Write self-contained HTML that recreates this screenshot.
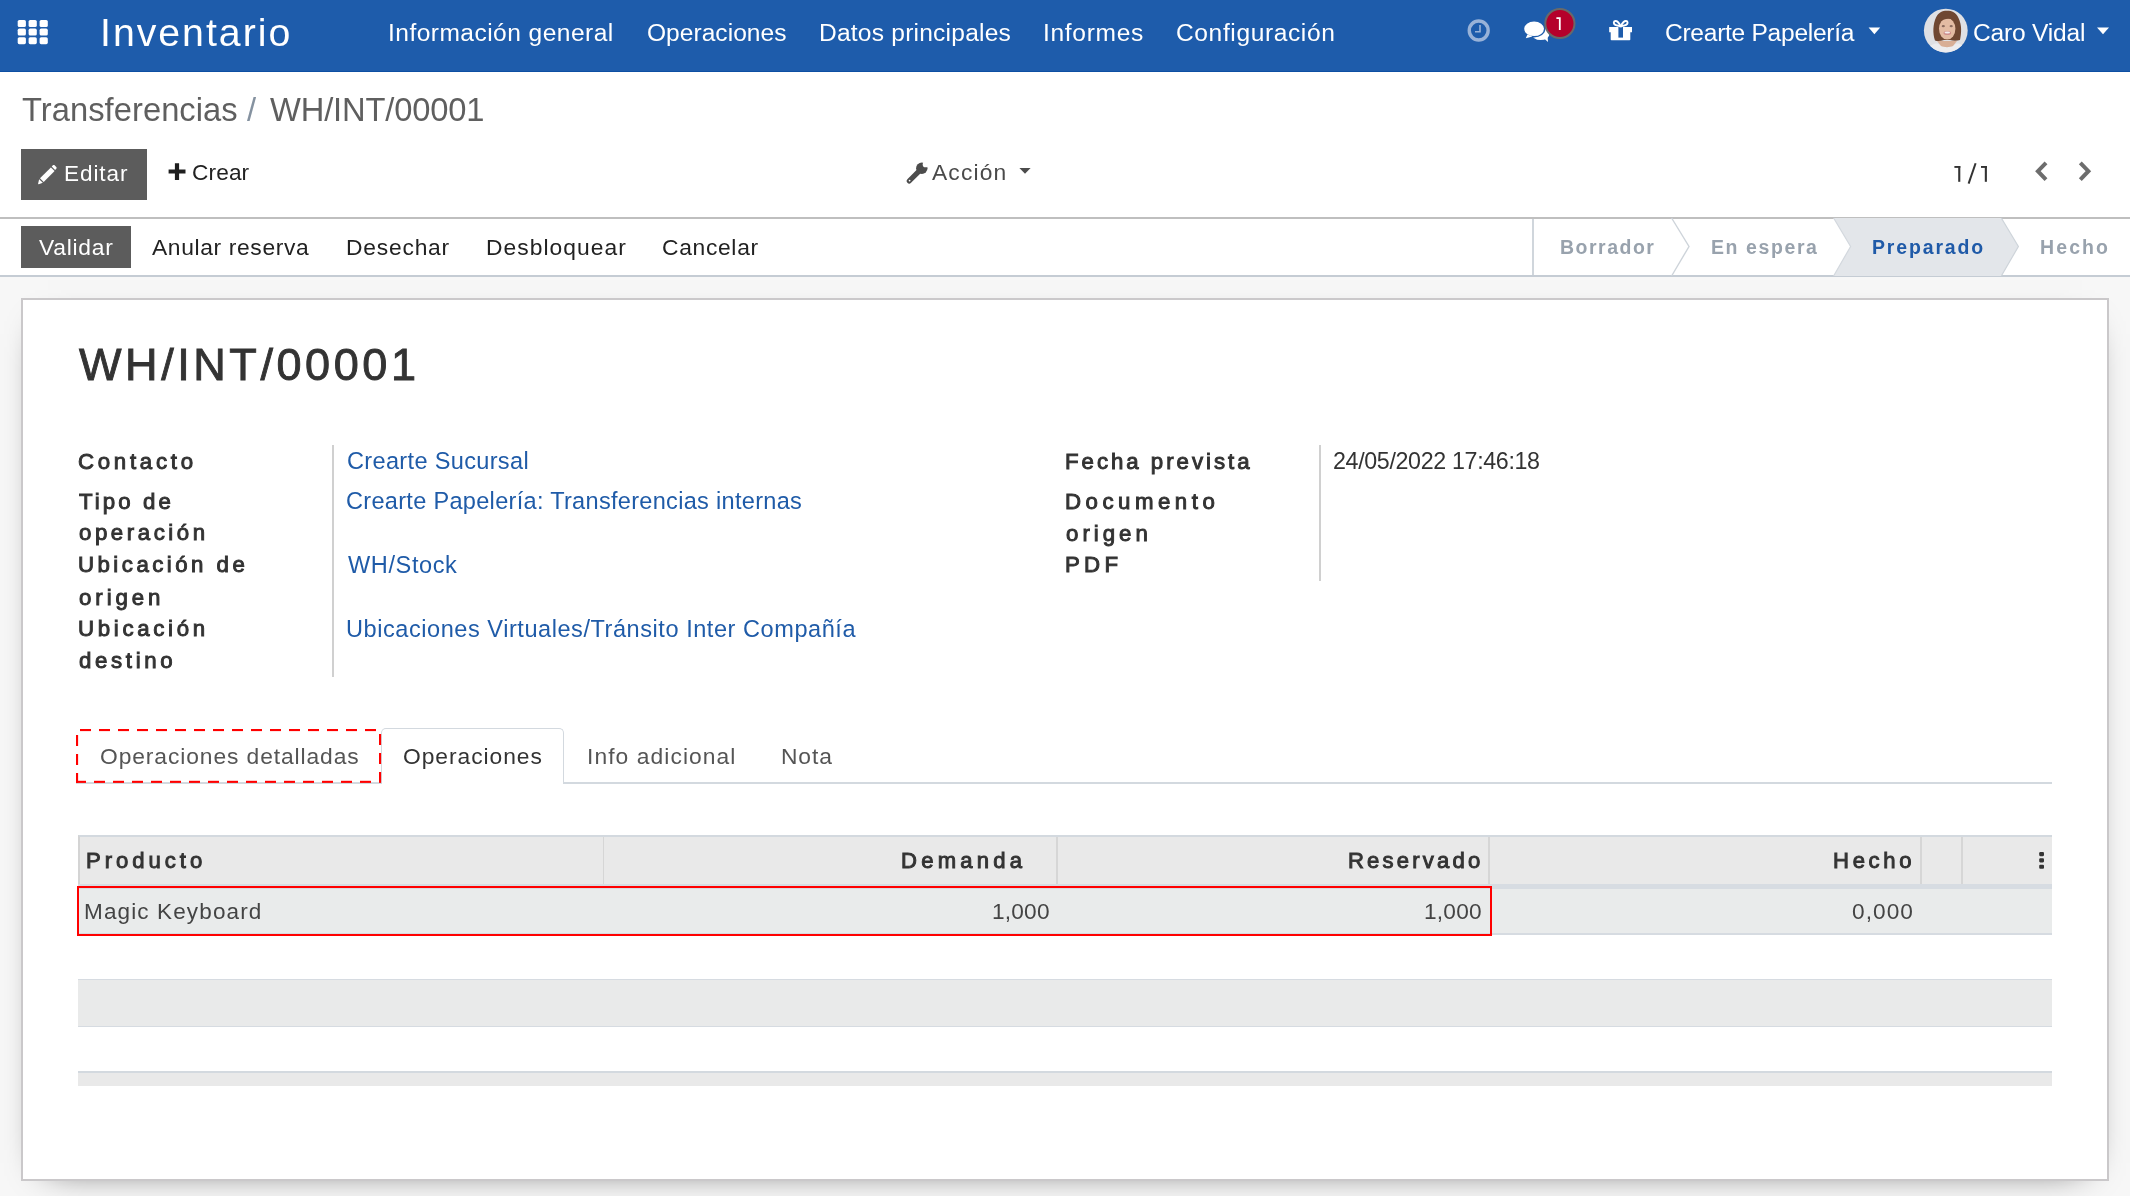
<!DOCTYPE html>
<html lang="es">
<head>
<meta charset="utf-8">
<title>Transferencias / WH/INT/00001 - Inventario</title>
<style>
html,body{margin:0;padding:0;}
body{width:2130px;height:1196px;overflow:hidden;position:relative;background:#f7f7f7;font-family:"Liberation Sans",sans-serif;}
.a{position:absolute;box-sizing:border-box;}
.t{position:absolute;white-space:nowrap;line-height:1;font-family:"Liberation Sans",sans-serif;will-change:transform;}
svg{position:absolute;overflow:visible;}
</style>
</head>
<body>
<!-- navbar -->
<div class="a" style="left:0;top:0;width:2130px;height:72px;background:#1e5cab;border-bottom:1px solid #0d4fa3;"></div>
<svg style="left:0;top:0" width="2130" height="72">
  <g fill="#fff">
    <rect x="17.7" y="20" width="8.2" height="7" rx="1.6"/>
    <rect x="28.6" y="20" width="8.2" height="7" rx="1.6"/>
    <rect x="39.6" y="20" width="8.2" height="7" rx="1.6"/>
    <rect x="17.7" y="28.6" width="8.2" height="7" rx="1.6"/>
    <rect x="28.6" y="28.6" width="8.2" height="7" rx="1.6"/>
    <rect x="39.6" y="28.6" width="8.2" height="7" rx="1.6"/>
    <rect x="17.7" y="37.2" width="8.2" height="7" rx="1.6"/>
    <rect x="28.6" y="37.2" width="8.2" height="7" rx="1.6"/>
    <rect x="39.6" y="37.2" width="8.2" height="7" rx="1.6"/>
  </g>
  <!-- clock -->
  <g stroke="#98b2d8" fill="none">
    <circle cx="1478.7" cy="30.5" r="9.45" stroke-width="3.4"/>
    <path d="M1480 25 V31.8 H1475" stroke-width="1.6"/>
  </g>
  <!-- chat -->
  <g fill="#fff">
    <ellipse cx="1540.6" cy="33.6" rx="9" ry="6.4"/>
    <path d="M1543.5 38 L1548 42 L1547.6 36.5 Z"/>
  </g>
  <g fill="#fff" stroke="#1e5cab" stroke-width="1.4">
    <ellipse cx="1534.1" cy="28.8" rx="10.6" ry="8"/>
  </g>
  <path d="M1527.4 34.6 L1525.8 38.3 L1532.5 36.4 Z" fill="#fff"/>
  <circle cx="1559.9" cy="23.5" r="14.6" fill="#b5002b" stroke="#696969" stroke-width="2"/>
  <path d="M1556.4 18.1 H1559.8 V30" stroke="#fff" stroke-width="1.8" fill="none"/>
  <!-- gift -->
  <path d="M1609.2 27 H1632 V32.3 H1630.3 V39.4 Q1630.3 40.2 1629.5 40.2 H1611.5 Q1610.7 40.2 1610.7 39.4 V32.3 H1609.2 Z" fill="#fff"/>
  <rect x="1618.4" y="27" width="4.6" height="10.6" fill="#1e5cab"/>
  <g fill="none" stroke="#fff" stroke-width="1.9">
    <path d="M1620.7 26.2 C1616.5 25.8 1613.8 24.8 1613.8 22.8 C1613.8 20.6 1616.4 20.6 1617.8 22 C1619 23.2 1620 24.6 1620.7 26.2 Z"/>
    <path d="M1620.7 26.2 C1624.9 25.8 1627.6 24.8 1627.6 22.8 C1627.6 20.6 1625 20.6 1623.6 22 C1622.4 23.2 1621.4 24.6 1620.7 26.2 Z"/>
  </g>
  <!-- carets -->
  <path d="M1868.6 27.6 H1880.2 L1874.4 34.2 Z" fill="#fff"/>
  <path d="M2097 27.6 H2109 L2103 34.2 Z" fill="#fff"/>
  <!-- avatar -->
  <defs><clipPath id="av"><circle cx="1945.8" cy="30.6" r="21.9"/></clipPath></defs>
  <g clip-path="url(#av)">
    <rect x="1920" y="5" width="52" height="52" fill="#dfe0e4"/>
    <path d="M1924 58 C1926 47 1932 43.5 1937 43.5 L1947 47 L1957 43.5 C1962 43.5 1966 47 1969 58 Z" fill="#ececef"/>
    <path d="M1937 41 L1957 41 L1953 46 C1950 47.5 1944 47.5 1941 46 Z" fill="#d8ae96"/>
    <path d="M1935 40.5 C1932.5 33 1933 24 1936 17.5 C1938.5 12.5 1942 10.8 1947 10.8 C1952 10.8 1956 12.5 1958.5 18 C1962 25 1961.5 33 1960 40 C1957 41 1953 41 1950 40 L1944 40 C1941 41 1937.5 41.5 1935 40.5 Z" fill="#6f4732"/>
    <ellipse cx="1947.2" cy="28.8" rx="8.2" ry="10.8" fill="#e3bba3"/>
    <path d="M1938.5 23 C1940 16 1944 14.5 1948 14.5 C1952 14.5 1955 16.5 1956 22 C1953 17.5 1944 17.5 1938.5 23 Z" fill="#6f4732"/>
    <ellipse cx="1943.3" cy="26.2" rx="1.6" ry="1.1" fill="#8a6a5e"/>
    <ellipse cx="1951.2" cy="26.2" rx="1.6" ry="1.1" fill="#8a6a5e"/>
    <ellipse cx="1947.3" cy="33" rx="3.8" ry="2.1" fill="#cf8f8d"/>
    <ellipse cx="1947.3" cy="32.4" rx="2.8" ry="1" fill="#f4eeee"/>
  </g>
</svg>

<!-- control panel -->
<div class="a" style="left:0;top:72px;width:2130px;height:145px;background:#fff;"></div>
<div class="a" style="left:21px;top:149px;width:126px;height:51px;background:#5c5c5c;"></div>
<svg style="left:0;top:140px" width="2130" height="80">
  <!-- pencil -->
  <g fill="#fff" transform="translate(47.2 34.6) scale(0.84) translate(-47.8 -34.2)">
    <path d="M52.2 25.6 L56.6 30 L43.6 43 L39.2 38.6 Z"/>
    <path d="M38.2 39.6 L42.6 44 L37.8 45.6 C37.3 45.8 36.8 45.3 37 44.8 Z"/>
    <path d="M53.2 24.6 L54.6 23.2 C55.2 22.6 56 22.6 56.6 23.2 L58.6 25.2 C59.2 25.8 59.2 26.6 58.6 27.2 L57.2 28.6 Z"/>
  </g>
  <!-- plus -->
  <path d="M174.9 23.3 H179.1 V29.5 H185.5 V33.6 H179.1 V39.9 H174.9 V33.6 H168.6 V29.5 H174.9 Z" fill="#1e1e1e"/>
  <!-- wrench -->
  <defs><mask id="wm"><rect x="890" y="10" width="60" height="50" fill="#fff"/><circle cx="925.6" cy="24.4" r="2.9" fill="#000"/><path d="M925.6 24.4 L932 18 L936 22 L929.6 28.4 Z" fill="#000"/></mask></defs>
  <g fill="#4c4c4c" mask="url(#wm)">
    <circle cx="921.8" cy="28.2" r="5.7"/>
  </g>
  <path d="M909.2 41 L918.6 31.6" stroke="#4c4c4c" stroke-width="5.2" stroke-linecap="round"/>
  <circle cx="909.6" cy="40.6" r="0.9" fill="#fff"/>
  <path d="M1019.4 27.9 H1030.6 L1025 33.8 Z" fill="#4c4c4c"/>
  <!-- pager 1/1 -->
  <g fill="#333">
    <rect x="1958.2" y="26" width="2.1" height="15.8"/>
    <rect x="1954.4" y="26" width="5.9" height="1.9"/>
    <rect x="1984.8" y="26" width="2.1" height="15.8"/>
    <rect x="1981" y="26" width="5.9" height="1.9"/>
  </g>
  <path d="M1968.6 43.6 L1975.6 23.2" stroke="#333" stroke-width="2"/>
  <!-- chevrons -->
  <path d="M2046 22.8 L2037.9 31.2 L2046 39.6" stroke="#6d6d6d" stroke-width="4" fill="none"/>
  <path d="M2080.3 22.8 L2088.4 31.2 L2080.3 39.6" stroke="#6d6d6d" stroke-width="4" fill="none"/>
</svg>

<!-- status bar -->
<div class="a" style="left:0;top:217px;width:2130px;height:60px;background:#fff;border-top:2px solid #bfbfbf;border-bottom:2px solid #c5ccd4;"></div>
<div class="a" style="left:21px;top:226px;width:110px;height:42px;background:#5c5c5c;"></div>
<svg style="left:0;top:200px" width="2130" height="100">
  <line x1="1533" y1="19" x2="1533" y2="75" stroke="#d0d6dc" stroke-width="2"/>
  <path d="M1671.6 18 L1689 46.5 L1671.6 76" stroke="#ced4da" stroke-width="1.4" fill="none"/>
  <path d="M1833.6 18 H2001.3 L2018.4 46.5 L2001.3 76 H1833.6 L1850.6 46.5 Z" fill="#e3e6ea"/>
  <path d="M1833.6 18 L1850.6 46.5 L1833.6 76" stroke="#d3d8de" stroke-width="1.2" fill="none"/>
  <path d="M2001.3 18 L2018.4 46.5 L2001.3 76" stroke="#ced4da" stroke-width="1.2" fill="none"/>
</svg>

<!-- card -->
<div class="a" style="left:21px;top:298px;width:2088px;height:883px;background:#fff;border:2px solid #cac8ca;box-shadow:0 9px 36px -27px #000;"></div>
<!-- field separators -->
<div class="a" style="left:332.4px;top:445px;width:1.6px;height:232px;background:#d0d0d0;"></div>
<div class="a" style="left:1319.3px;top:445px;width:1.6px;height:136px;background:#d0d0d0;"></div>

<!-- tabs -->
<div class="a" style="left:76px;top:782px;width:1976px;height:1.8px;background:#d3d9df;"></div>
<div class="a" style="left:381px;top:728.3px;width:183.4px;height:56px;background:#fff;border:1.8px solid #d3d9df;border-bottom:none;border-radius:5px 5px 0 0;"></div>
<svg style="left:0;top:0" width="400" height="800"><g fill="#ff0000"><rect x="80.0" y="729" width="11.0" height="2.1"/><rect x="99.0" y="729" width="11.0" height="2.1"/><rect x="118.0" y="729" width="11.0" height="2.1"/><rect x="137.0" y="729" width="11.0" height="2.1"/><rect x="156.0" y="729" width="11.0" height="2.1"/><rect x="175.0" y="729" width="11.0" height="2.1"/><rect x="194.0" y="729" width="11.0" height="2.1"/><rect x="213.0" y="729" width="11.0" height="2.1"/><rect x="232.0" y="729" width="11.0" height="2.1"/><rect x="251.0" y="729" width="11.0" height="2.1"/><rect x="270.0" y="729" width="11.0" height="2.1"/><rect x="289.0" y="729" width="11.0" height="2.1"/><rect x="308.0" y="729" width="11.0" height="2.1"/><rect x="327.0" y="729" width="11.0" height="2.1"/><rect x="346.0" y="729" width="11.0" height="2.1"/><rect x="365.0" y="729" width="11.0" height="2.1"/><rect x="76" y="780.8" width="10" height="2.1"/><rect x="94.0" y="780.8" width="11.0" height="2.1"/><rect x="113.0" y="780.8" width="11.0" height="2.1"/><rect x="132.0" y="780.8" width="11.0" height="2.1"/><rect x="151.0" y="780.8" width="11.0" height="2.1"/><rect x="170.0" y="780.8" width="11.0" height="2.1"/><rect x="189.0" y="780.8" width="11.0" height="2.1"/><rect x="208.0" y="780.8" width="11.0" height="2.1"/><rect x="227.0" y="780.8" width="11.0" height="2.1"/><rect x="246.0" y="780.8" width="11.0" height="2.1"/><rect x="265.0" y="780.8" width="11.0" height="2.1"/><rect x="284.0" y="780.8" width="11.0" height="2.1"/><rect x="303.0" y="780.8" width="11.0" height="2.1"/><rect x="322.0" y="780.8" width="11.0" height="2.1"/><rect x="341.0" y="780.8" width="11.0" height="2.1"/><rect x="360.0" y="780.8" width="11.0" height="2.1"/><rect x="76" y="735.0" width="2.1" height="11.0"/><rect x="76" y="754.0" width="2.1" height="11.0"/><rect x="76" y="773.0" width="2.1" height="9.9"/><rect x="379" y="734.0" width="2.1" height="11.0"/><rect x="379" y="753.0" width="2.1" height="11.0"/><rect x="379" y="772.0" width="2.1" height="10.9"/></g></svg>

<!-- table -->
<div class="a" style="left:78px;top:835px;width:1974px;height:50px;background:#e9e9e9;border-top:2px solid #d3d9df;border-left:2px solid #d4d4d4;"></div>
<div class="a" style="left:602.9px;top:836.5px;width:1.6px;height:48px;background:#d6d6d6;"></div>
<div class="a" style="left:1056.2px;top:836.5px;width:1.6px;height:48px;background:#d6d6d6;"></div>
<div class="a" style="left:1488.2px;top:836.5px;width:1.6px;height:48px;background:#d6d6d6;"></div>
<div class="a" style="left:1920.3px;top:836.5px;width:1.6px;height:48px;background:#d6d6d6;"></div>
<div class="a" style="left:1961.2px;top:836.5px;width:1.6px;height:48px;background:#d6d6d6;"></div>
<div class="a" style="left:78px;top:884px;width:1974px;height:4.6px;background:#d7dce2;"></div>
<div class="a" style="left:78px;top:888.6px;width:1974px;height:46.4px;background:#e9ebeb;border-bottom:2px solid #d6dbe1;"></div>
<div class="a" style="left:77.3px;top:885.8px;width:1414.7px;height:50.1px;border:2.2px solid #ff0000;"></div>
<svg style="left:2030px;top:845px" width="20" height="30">
  <g fill="#333"><rect x="9.2" y="7.1" width="4.8" height="4.1" rx="1.1"/><rect x="9.2" y="13.3" width="4.8" height="4.1" rx="1.1"/><rect x="9.2" y="19.7" width="4.8" height="4.1" rx="1.1"/></g>
</svg>
<div class="a" style="left:78px;top:979px;width:1974px;height:48px;background:#e9eaea;border-top:1.6px solid #d6dbe1;border-bottom:1.6px solid #d6dbe1;"></div>
<div class="a" style="left:78px;top:1071px;width:1974px;height:15px;background:#e9e9e9;border-top:2px solid #d3d9df;"></div>

<span class="t" style="left:99.60px;top:13.08px;font-size:39.24px;font-weight:400;color:#ffffff;letter-spacing:1.991px;">Inventario</span>
<span class="t" style="left:387.80px;top:20.51px;font-size:24.56px;font-weight:400;color:#ffffff;letter-spacing:0.461px;">Información general</span>
<span class="t" style="left:646.60px;top:20.51px;font-size:24.56px;font-weight:400;color:#ffffff;letter-spacing:0.029px;">Operaciones</span>
<span class="t" style="left:818.90px;top:20.51px;font-size:24.56px;font-weight:400;color:#ffffff;letter-spacing:0.224px;">Datos principales</span>
<span class="t" style="left:1043.00px;top:20.51px;font-size:24.56px;font-weight:400;color:#ffffff;letter-spacing:0.683px;">Informes</span>
<span class="t" style="left:1176.00px;top:20.51px;font-size:24.56px;font-weight:400;color:#ffffff;letter-spacing:0.616px;">Configuración</span>
<span class="t" style="left:1664.80px;top:20.51px;font-size:24.56px;font-weight:400;color:#ffffff;letter-spacing:-0.269px;">Crearte Papelería</span>
<span class="t" style="left:1972.80px;top:20.51px;font-size:24.56px;font-weight:400;color:#ffffff;letter-spacing:-0.190px;">Caro Vidal</span>
<span class="t" style="left:21.50px;top:94.32px;font-size:32.70px;font-weight:400;color:#5f5f5f;letter-spacing:0.052px;">Transferencias</span>
<span class="t" style="left:247.00px;top:94.32px;font-size:32.70px;font-weight:400;color:#8592a0;letter-spacing:0.000px;">/</span>
<span class="t" style="left:269.80px;top:94.32px;font-size:32.70px;font-weight:400;color:#5f5f5f;letter-spacing:-0.163px;">WH/INT/00001</span>
<span class="t" style="left:63.70px;top:163.23px;font-size:22.53px;font-weight:400;color:#ffffff;letter-spacing:0.936px;">Editar</span>
<span class="t" style="left:191.90px;top:160.91px;font-size:22.67px;font-weight:400;color:#222;letter-spacing:0.123px;">Crear</span>
<span class="t" style="left:932.40px;top:160.88px;font-size:22.82px;font-weight:400;color:#4a4a4a;letter-spacing:1.143px;">Acción</span>
<span class="t" style="left:38.50px;top:236.28px;font-size:22.82px;font-weight:400;color:#ffffff;letter-spacing:0.747px;">Validar</span>
<span class="t" style="left:152.00px;top:236.18px;font-size:22.82px;font-weight:400;color:#222;letter-spacing:0.641px;">Anular reserva</span>
<span class="t" style="left:346.00px;top:236.18px;font-size:22.82px;font-weight:400;color:#222;letter-spacing:0.795px;">Desechar</span>
<span class="t" style="left:486.40px;top:236.18px;font-size:22.82px;font-weight:400;color:#222;letter-spacing:1.054px;">Desbloquear</span>
<span class="t" style="left:662.40px;top:236.18px;font-size:22.82px;font-weight:400;color:#222;letter-spacing:0.686px;">Cancelar</span>
<span class="t" style="left:1559.70px;top:238.01px;font-size:19.48px;font-weight:700;color:#98a2ad;letter-spacing:1.512px;">Borrador</span>
<span class="t" style="left:1710.50px;top:238.01px;font-size:19.48px;font-weight:700;color:#98a2ad;letter-spacing:1.608px;">En espera</span>
<span class="t" style="left:1872.30px;top:238.01px;font-size:19.48px;font-weight:700;color:#1f5aa8;letter-spacing:1.862px;">Preparado</span>
<span class="t" style="left:2039.70px;top:238.01px;font-size:19.48px;font-weight:700;color:#98a2ad;letter-spacing:2.123px;">Hecho</span>
<span class="t" style="left:79.30px;top:341.96px;font-size:45.06px;font-weight:400;color:#333;letter-spacing:3.550px;-webkit-text-stroke:0.90px #333;">WH/INT/00001</span>
<span class="t" style="left:77.60px;top:450.67px;font-size:22.24px;font-weight:400;color:#333;letter-spacing:3.725px;-webkit-text-stroke:0.95px #333;">Contacto</span>
<span class="t" style="left:78.60px;top:490.67px;font-size:22.24px;font-weight:400;color:#333;letter-spacing:3.072px;-webkit-text-stroke:0.95px #333;">Tipo de</span>
<span class="t" style="left:78.60px;top:522.47px;font-size:22.24px;font-weight:400;color:#333;letter-spacing:3.564px;-webkit-text-stroke:0.95px #333;">operación</span>
<span class="t" style="left:77.60px;top:554.47px;font-size:22.24px;font-weight:400;color:#333;letter-spacing:3.475px;-webkit-text-stroke:0.95px #333;">Ubicación de</span>
<span class="t" style="left:78.60px;top:586.57px;font-size:22.24px;font-weight:400;color:#333;letter-spacing:3.932px;-webkit-text-stroke:0.95px #333;">origen</span>
<span class="t" style="left:77.60px;top:618.47px;font-size:22.24px;font-weight:400;color:#333;letter-spacing:3.691px;-webkit-text-stroke:0.95px #333;">Ubicación</span>
<span class="t" style="left:78.60px;top:650.47px;font-size:22.24px;font-weight:400;color:#333;letter-spacing:3.661px;-webkit-text-stroke:0.95px #333;">destino</span>
<span class="t" style="left:1064.90px;top:450.67px;font-size:22.24px;font-weight:400;color:#333;letter-spacing:2.980px;-webkit-text-stroke:0.95px #333;">Fecha prevista</span>
<span class="t" style="left:1064.90px;top:490.67px;font-size:22.24px;font-weight:400;color:#333;letter-spacing:4.508px;-webkit-text-stroke:0.95px #333;">Documento</span>
<span class="t" style="left:1065.90px;top:522.67px;font-size:22.24px;font-weight:400;color:#333;letter-spacing:4.012px;-webkit-text-stroke:0.95px #333;">origen</span>
<span class="t" style="left:1064.90px;top:554.47px;font-size:22.24px;font-weight:400;color:#333;letter-spacing:4.256px;-webkit-text-stroke:0.95px #333;">PDF</span>
<span class="t" style="left:346.60px;top:449.86px;font-size:23.55px;font-weight:400;color:#1f5ba8;letter-spacing:0.331px;">Crearte Sucursal</span>
<span class="t" style="left:346.40px;top:489.86px;font-size:23.55px;font-weight:400;color:#1f5ba8;letter-spacing:0.297px;">Crearte Papelería: Transferencias internas</span>
<span class="t" style="left:347.60px;top:553.66px;font-size:23.55px;font-weight:400;color:#1f5ba8;letter-spacing:0.602px;">WH/Stock</span>
<span class="t" style="left:346.40px;top:617.66px;font-size:23.55px;font-weight:400;color:#1f5ba8;letter-spacing:0.544px;">Ubicaciones Virtuales/Tránsito Inter Compañía</span>
<span class="t" style="left:1333.20px;top:450.01px;font-size:23.26px;font-weight:400;color:#333;letter-spacing:-0.350px;">24/05/2022 17:46:18</span>
<span class="t" style="left:99.60px;top:745.18px;font-size:22.82px;font-weight:400;color:#555;letter-spacing:0.906px;">Operaciones detalladas</span>
<span class="t" style="left:403.30px;top:745.18px;font-size:22.82px;font-weight:400;color:#333;letter-spacing:0.946px;">Operaciones</span>
<span class="t" style="left:586.90px;top:745.18px;font-size:22.82px;font-weight:400;color:#555;letter-spacing:1.072px;">Info adicional</span>
<span class="t" style="left:781.30px;top:745.18px;font-size:22.82px;font-weight:400;color:#555;letter-spacing:0.900px;">Nota</span>
<span class="t" style="left:86.10px;top:850.00px;font-size:22.09px;font-weight:400;color:#333;letter-spacing:3.973px;-webkit-text-stroke:0.95px #333;">Producto</span>
<span class="t" style="left:900.80px;top:850.00px;font-size:22.09px;font-weight:400;color:#333;letter-spacing:4.208px;-webkit-text-stroke:0.95px #333;">Demanda</span>
<span class="t" style="left:1347.80px;top:850.00px;font-size:22.09px;font-weight:400;color:#333;letter-spacing:3.176px;-webkit-text-stroke:0.95px #333;">Reservado</span>
<span class="t" style="left:1832.90px;top:850.00px;font-size:22.09px;font-weight:400;color:#333;letter-spacing:3.690px;-webkit-text-stroke:0.95px #333;">Hecho</span>
<span class="t" style="left:83.80px;top:900.63px;font-size:22.53px;font-weight:400;color:#444;letter-spacing:1.125px;">Magic Keyboard</span>
<span class="t" style="left:991.50px;top:900.11px;font-size:22.67px;font-weight:400;color:#444;letter-spacing:0.201px;">1,000</span>
<span class="t" style="left:1424.00px;top:900.11px;font-size:22.67px;font-weight:400;color:#444;letter-spacing:0.226px;">1,000</span>
<span class="t" style="left:1852.10px;top:900.01px;font-size:22.67px;font-weight:400;color:#444;letter-spacing:1.051px;">0,000</span>
</body>
</html>
